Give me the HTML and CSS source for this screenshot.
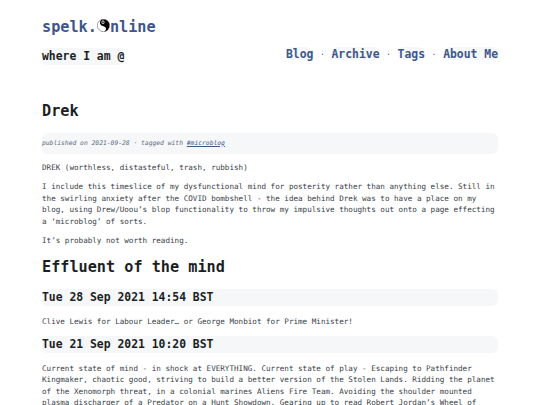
FILE: index.html
```html
<!DOCTYPE html>
<html lang="en">
<head>
<meta charset="utf-8">
<title>Drek</title>
<link rel="stylesheet" href="styles.css">
</head>
<body>
<div class="page">
<header class="site-header">
<a class="brand" href="#">spelk.<svg class="yinyang" viewBox="0 0 26 26" aria-hidden="true"><circle cx="13" cy="13" r="12.400" fill="#fff" stroke="#444" stroke-width="1"/><path d="M9 1.500Q13 0 17 1.500A12.500 12.500 0 0 1 14 25.400C20 22 19 16 13 14.500C5 13 4 5 9 1.500z"/><ellipse cx="12" cy="6.500" rx="2.200" ry="3.200" fill="none" stroke="#fff" stroke-width="1.600"/></svg>nline</a>
<div class="bar">
<div class="tagline">where I am @</div>
<nav class="nav"><a href="#">Blog</a><span>·</span><a href="#">Archive</a><span>·</span><a href="#">Tags</a><span>·</span><a href="#">About Me</a></nav>
</div>
</header>
<main>
<h1 class="title">Drek</h1>
<div class="meta">published on 2021-09-28 · tagged with <a href="#">#microblog</a></div>
<p>DREK (worthless, distasteful, trash, rubbish)</p>
<p>I include this timeslice of my dysfunctional mind for posterity rather than anything else. Still in<br>the swirling anxiety after the COVID bombshell - the idea behind Drek was to have a place on my<br>blog, using Drew/Uoou’s blop functionality to throw my impulsive thoughts out onto a page effecting<br>a ‘microblog’ of sorts.</p>
<p>It’s probably not worth reading.</p>
<h1 class="section">Effluent of the mind</h1>
<h2>Tue 28 Sep 2021 14:54 BST</h2>
<p>Clive Lewis for Labour Leader… or George Monbiot for Prime Minister!</p>
<h2>Tue 21 Sep 2021 10:20 BST</h2>
<p>Current state of mind - in shock at EVERYTHING. Current state of play - Escaping to Pathfinder<br>Kingmaker, chaotic good, striving to build a better version of the Stolen Lands. Ridding the planet<br>of the Xenomorph threat, in a colonial marines Aliens Fire Team. Avoiding the shoulder mounted<br>plasma discharger of a Predator on a Hunt Showdown. Gearing up to read Robert Jordan’s Wheel of</p>
</main>
</div>
</body>
</html>
```

FILE: styles.css
```css
body {
  margin: 0;
  height: 405px;
  overflow: hidden;
  background: #fff;
  color: #373d46;
  font: 7.6px/11.4px "DejaVu Sans Mono", monospace;
}
.page { width: 456px; margin: 0 auto; padding-top: 18px; }
a { color: #3f568a; }
.brand {
  display: flex;
  align-items: center;
  height: 20px;
  font-size: 15.2px;
  font-weight: bold;
  text-decoration: none;
}
.yinyang { width: 13px; height: 13px; margin-top: -5px; }
.bar {
  display: flex;
  justify-content: space-between;
  align-items: flex-start;
  height: 20px;
  margin-top: 9px;
  font-size: 11.4px;
  font-weight: bold;
}
.tagline {
  margin-top: 1px;
  border-radius: 6px;
  background: #f5f7f9;
  color: #1b1f24;
  line-height: 17px;
}
.nav { display: flex; line-height: 15px; }
.nav span { width: 18.1px; text-align: center; font-weight: normal; font-size: 7.6px; }
.nav a {
  height: 13px;
  border-radius: 6px;
  background: #f5f7f9;
  text-decoration: none;
}
h1, h2 { color: #1b1f24; }
h1 { margin: 0; font-size: 15.2px; line-height: 20px; }
.title { margin-top: 34px; }
.section { margin: 10.8px 0 12.2px; }
.meta {
  margin: 11.5px 0 8.6px;
  height: 21.3px;
  border-radius: 6px;
  background: #f5f7f9;
  color: #5c6a7e;
  font-size: 6.33px;
  line-height: 20px;
  font-style: italic;
}
p { margin: 7.6px 0; }
h2 {
  margin: 9.5px 0;
  height: 17px;
  border-radius: 6px;
  background: #f5f7f9;
  font-size: 11.4px;
  line-height: 17px;
}
```
